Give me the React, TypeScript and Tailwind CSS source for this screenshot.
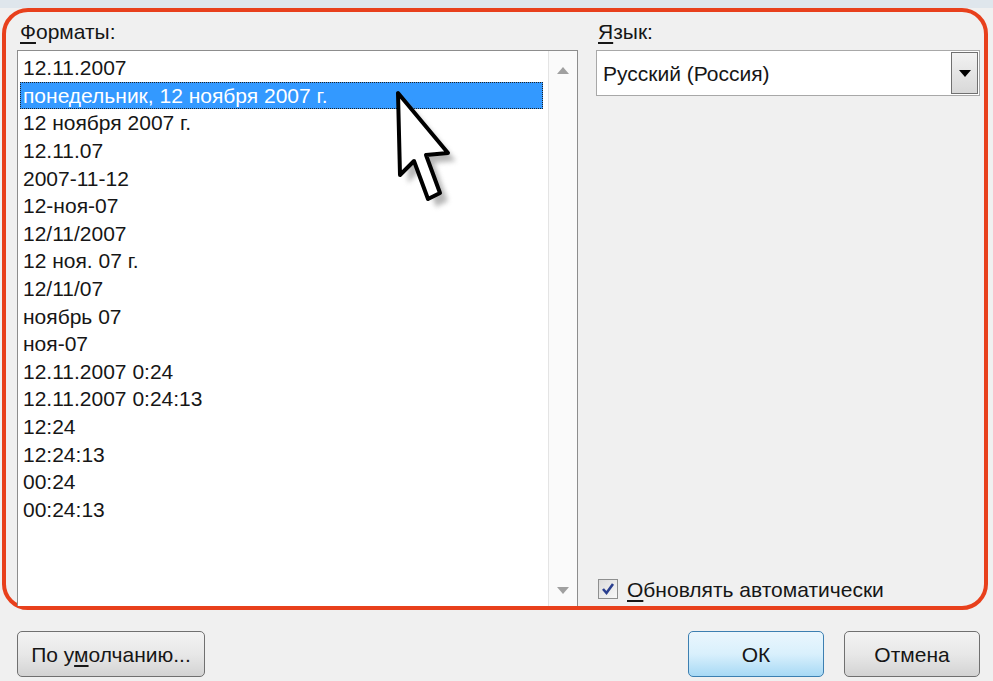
import React from "react";

const items = [
  "12.11.2007",
  "понедельник, 12 ноября 2007 г.",
  "12 ноября 2007 г.",
  "12.11.07",
  "2007-11-12",
  "12-ноя-07",
  "12/11/2007",
  "12 ноя. 07 г.",
  "12/11/07",
  "ноябрь 07",
  "ноя-07",
  "12.11.2007 0:24",
  "12.11.2007 0:24:13",
  "12:24",
  "12:24:13",
  "00:24",
  "00:24:13",
];

export default function App() {
  return (
    <div
      className="relative w-[993px] h-[681px] overflow-hidden bg-[#f0f0f0] text-[#161616] flex flex-col"
      style={{ fontFamily: '"Liberation Sans", Arial, sans-serif' }}
    >
      <div className="h-[8px] bg-[#dfe6ec] shrink-0" />
      <div className="ml-[2px] w-[986px] h-[602px] border-[4px] border-[#e8401c] rounded-[26px] pl-[11px] pr-[4px] flex gap-[18px] shrink-0">
        {/* Left column */}
        <div className="w-[561px] flex flex-col">
          <div className="h-[38px] flex items-center pl-[3px] text-[21px] leading-none">
            <span>
              <span className="underline underline-offset-[3px]">Ф</span>орматы:
            </span>
          </div>
          <div className="flex-1 flex bg-white border border-[#8d8d8d] border-b-0">
            <div className="flex-1 pt-[3px] pl-[2px] pr-[5px]">
              {items.map((t, i) =>
                i === 1 ? (
                  <div
                    key={i}
                    className="h-[27.6px] flex items-center pl-[2px] bg-[#3399ff] text-white text-[21px] leading-none border border-dotted border-[#222]"
                  >
                    {t}
                  </div>
                ) : (
                  <div
                    key={i}
                    className="h-[27.6px] flex items-center pl-[3px] text-[21px] leading-none"
                  >
                    {t}
                  </div>
                )
              )}
            </div>
            <div className="w-[29px] bg-[#fafafa] border-l border-[#e4e4e4] flex flex-col justify-between items-center pt-[16px] pb-[12px]">
              <svg width="12" height="7" viewBox="0 0 12 7">
                <path d="M0 7 L6 0 L12 7 Z" fill="#a0a0a0" />
              </svg>
              <svg width="12" height="7" viewBox="0 0 12 7">
                <path d="M0 0 L6 7 L12 0 Z" fill="#a0a0a0" />
              </svg>
            </div>
          </div>
        </div>
        {/* Right column */}
        <div className="w-[384px] flex flex-col">
          <div className="h-[38px] flex items-center pl-[2px] text-[21px] leading-none">
            <span>
              <span className="underline underline-offset-[3px]">Я</span>зык:
            </span>
          </div>
          <div className="h-[46px] bg-white border border-[#a8a8a8] flex items-center">
            <div className="flex-1 pl-[6px] text-[21px] leading-none">Русский (Россия)</div>
            <div className="w-[27px] h-[42px] mr-[1px] border border-[#707070] bg-gradient-to-b from-[#f2f2f2] to-[#d8d8d8] flex items-center justify-center">
              <svg width="12" height="7" viewBox="0 0 12 7">
                <path d="M0 0 L6 7 L12 0 Z" fill="#000" />
              </svg>
            </div>
          </div>
          <div className="flex-1" />
          <div className="h-[30px] mb-[2px] flex items-center pl-[2px] gap-[9px]">
            <div className="w-[20px] h-[20px] border border-[#8e8f8f] bg-gradient-to-br from-[#dcdcdc] to-[#f8f8f8] flex items-center justify-center">
              <svg width="14" height="14" viewBox="0 0 14 14">
                <path d="M2 7 L5.5 11 L12 2" stroke="#2a3f8f" strokeWidth="2.6" fill="none" />
              </svg>
            </div>
            <span className="text-[21px] leading-none">
              <span className="underline underline-offset-[3px]">О</span>бновлять автоматически
            </span>
          </div>
        </div>
      </div>
      {/* Buttons */}
      <div className="flex mt-[21px] pl-[17px] pr-[13px]">
        <div className="w-[188px] h-[46px] rounded-[5px] border border-[#707070] bg-gradient-to-b from-[#f3f3f3] via-[#e8e8e8] to-[#d3d3d3] flex items-center justify-center text-[21px] leading-none">
          <span>
            По у<span className="underline underline-offset-[3px]">м</span>олчанию...
          </span>
        </div>
        <div className="flex-1" />
        <div className="w-[136px] h-[46px] rounded-[5px] border border-[#3c7fb1] bg-gradient-to-b from-[#eaf6fd] via-[#d9f0fc] to-[#a7d9f5] flex items-center justify-center text-[21px] leading-none">
          ОК
        </div>
        <div className="w-[136px] h-[46px] ml-[20px] rounded-[5px] border border-[#707070] bg-gradient-to-b from-[#f3f3f3] via-[#e8e8e8] to-[#d3d3d3] flex items-center justify-center text-[21px] leading-none">
          Отмена
        </div>
      </div>
      {/* Cursor overlay */}
      <svg
        className="absolute left-[394px] top-[89px]"
        width="72"
        height="128"
        viewBox="0 0 72 128"
      >
        <defs>
          <filter id="blur" x="-20%" y="-20%" width="140%" height="140%">
            <feGaussianBlur stdDeviation="2.5" />
          </filter>
        </defs>
        <path
          d="M12 12 L14 94 L28 80 L42 118 L54 112 L40 74 L62 72 Z"
          fill="#888"
          opacity="0.6"
          filter="url(#blur)"
        />
        <path
          d="M4 4 L6 86 L20 72 L34 110 L46 104 L32 66 L54 64 Z"
          fill="#fff"
          stroke="#000"
          strokeWidth="4"
          strokeLinejoin="round"
        />
      </svg>
    </div>
  );
}
